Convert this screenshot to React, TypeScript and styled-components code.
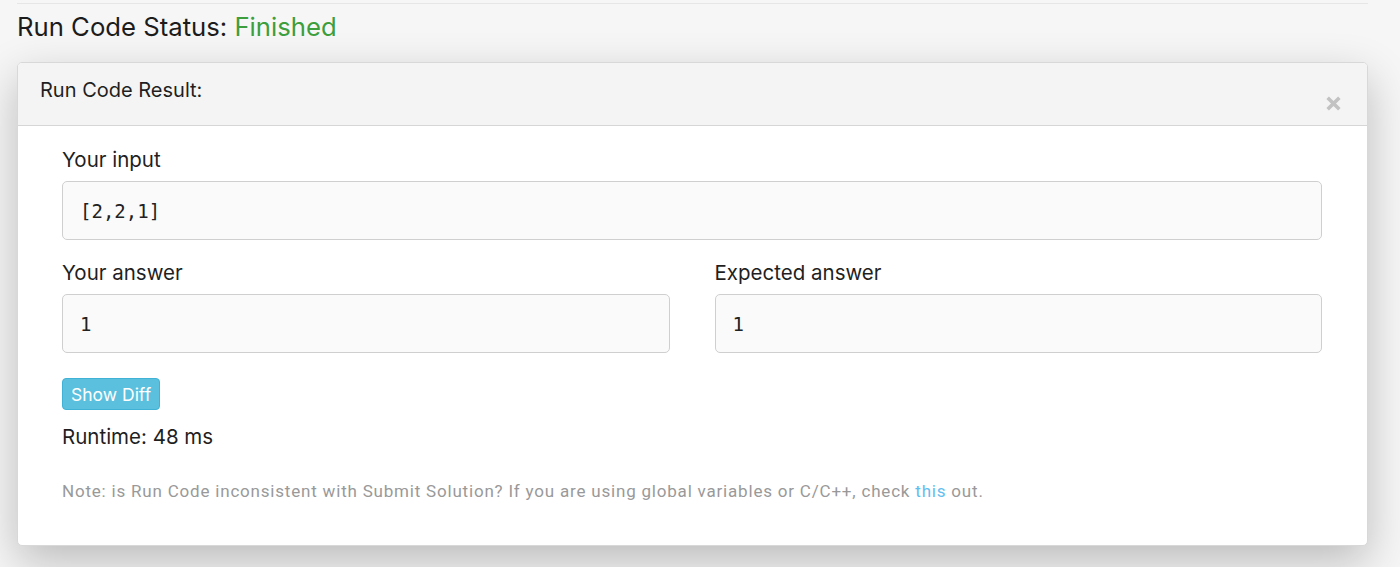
import React from 'react';
import styled, { createGlobalStyle } from 'styled-components';

const GlobalStyle = createGlobalStyle`
  html, body {
    margin: 0;
    padding: 0;
    background: #f6f6f6;
    font-family: Inter, "Helvetica Neue", Arial, sans-serif;
    color: #1f1f1f;
  }
`;

const Page = styled.div`
  padding: 3px 32px 0 17px;
  height: 567px;
  box-sizing: border-box;
  overflow: hidden;
`;

const TopRule = styled.div`
  height: 1px;
  background: #e6e6e6;
`;

const StatusTitle = styled.h2`
  margin: 8px 0 0;
  font-size: 25.7px;
  font-weight: 400;
  line-height: 30px;
  color: #1c1c1c;
`;

const StatusValue = styled.span`
  color: #3c9e3c;
`;

const Card = styled.div`
  margin-top: 20px;
  background: #fff;
  border: 1px solid #d8d8d8;
  border-radius: 5px;
  box-shadow: 0 16px 45px rgba(0, 0, 0, 0.24);
  overflow: hidden;
`;

const CardHeader = styled.div`
  height: 63px;
  background: #f4f4f4;
  border-bottom: 1px solid #d6d6d6;
  display: flex;
  justify-content: space-between;
  padding: 0 24px 0 22px;
  box-sizing: border-box;
`;

const HeaderTitle = styled.div`
  font-size: 20px;
  line-height: 24px;
  padding-top: 15px;
  color: #1f1f1f;
`;

const CloseButton = styled.button`
  border: none;
  background: none;
  padding: 0;
  margin-top: 30px;
  height: 20px;
  width: 20px;
  display: flex;
  align-items: center;
  justify-content: center;
  cursor: pointer;
`;

const CardBody = styled.div`
  padding: 22px 45px 43px 44px;
`;

const Label = styled.div`
  font-size: 20.5px;
  line-height: 24px;
  margin-bottom: 9px;
  color: #1f1f1f;
`;

const Field = styled.div`
  height: 59px;
  box-sizing: border-box;
  background: #fafafa;
  border: 1px solid #cfcfcf;
  border-radius: 5px;
  padding: 0 17px;
  display: flex;
  align-items: center;
  font-family: "DejaVu Sans Mono", "Liberation Mono", monospace;
  font-size: 19px;
  color: #222;
`;

const Group = styled.div`
  margin-bottom: 21px;
`;

const Columns = styled.div`
  display: grid;
  grid-template-columns: 1fr 1fr;
  column-gap: 45px;
`;

const DiffButton = styled.button`
  margin-top: 4px;
  height: 32px;
  padding: 0 8px;
  background: #5bc0de;
  border: 1px solid #3fb2d6;
  border-radius: 4px;
  color: #fff;
  font-family: Inter, "Helvetica Neue", Arial, sans-serif;
  font-size: 17.5px;
  cursor: pointer;
`;

const Runtime = styled.div`
  margin-top: 15px;
  font-size: 20.5px;
  line-height: 24px;
`;

const Note = styled.div`
  margin-top: 31px;
  font-family: Roboto, "Helvetica Neue", Arial, sans-serif;
  font-size: 17px;
  line-height: 22px;
  letter-spacing: 0.8px;
  color: #999;
`;

const NoteLink = styled.a`
  color: #63bdf0;
  text-decoration: none;
`;

const CloseIcon = () => (
  <svg width="17" height="17" viewBox="0 0 16 16">
    <path d="M2.5 2.5 L13.5 13.5 M13.5 2.5 L2.5 13.5" stroke="#c2c2c2" strokeWidth="3.4" />
  </svg>
);

export default function App() {
  return (
    <>
      <GlobalStyle />
      <Page>
        <TopRule />
        <StatusTitle>
          Run Code Status: <StatusValue>Finished</StatusValue>
        </StatusTitle>
        <Card>
          <CardHeader>
            <HeaderTitle>Run Code Result:</HeaderTitle>
            <CloseButton aria-label="close">
              <CloseIcon />
            </CloseButton>
          </CardHeader>
          <CardBody>
            <Group>
              <Label>Your input</Label>
              <Field>[2,2,1]</Field>
            </Group>
            <Columns>
              <Group>
                <Label>Your answer</Label>
                <Field>1</Field>
              </Group>
              <Group>
                <Label>Expected answer</Label>
                <Field>1</Field>
              </Group>
            </Columns>
            <DiffButton>Show Diff</DiffButton>
            <Runtime>Runtime: 48 ms</Runtime>
            <Note>
              Note: is Run Code inconsistent with Submit Solution? If you are using global variables or C/C++, check{' '}
              <NoteLink href="#">this</NoteLink> out.
            </Note>
          </CardBody>
        </Card>
      </Page>
    </>
  );
}
